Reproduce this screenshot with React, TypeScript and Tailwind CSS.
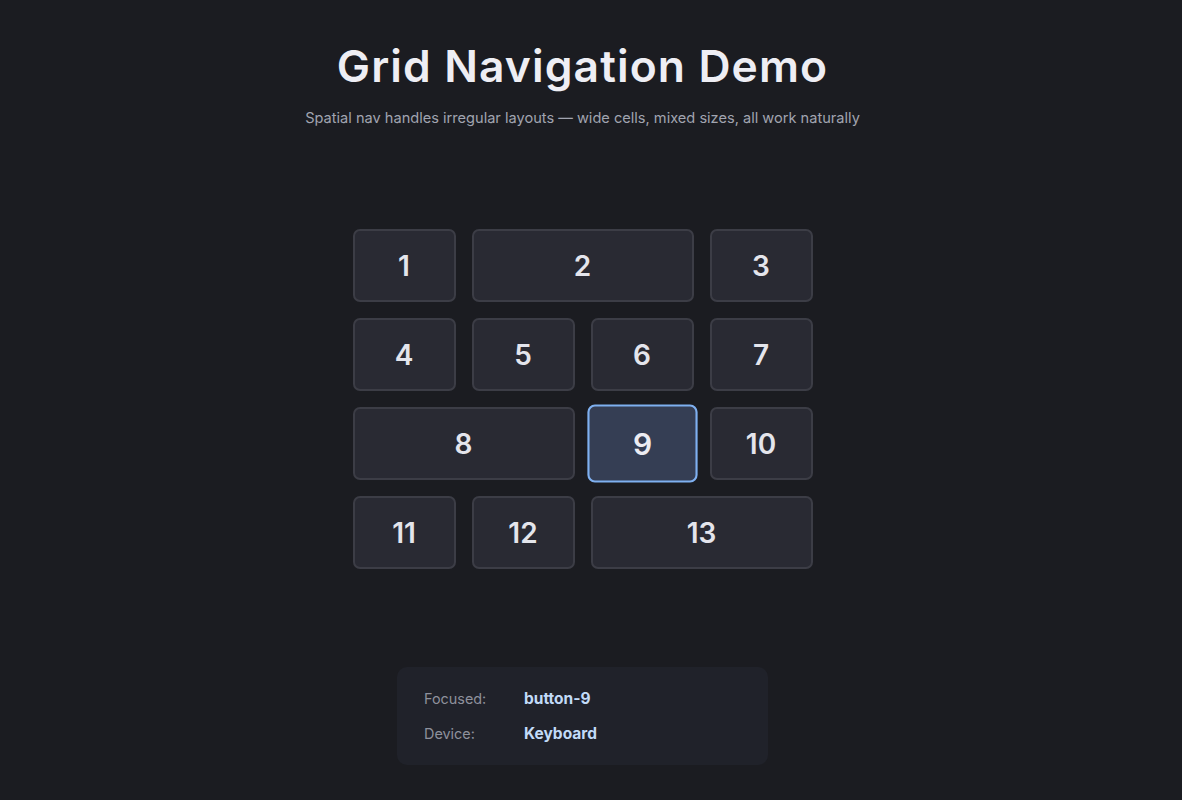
import React from "react";

const cells: { n: number; span: string; focused?: boolean }[] = [
  { n: 1, span: "col-span-1" },
  { n: 2, span: "col-span-2" },
  { n: 3, span: "col-span-1" },
  { n: 4, span: "col-span-1" },
  { n: 5, span: "col-span-1" },
  { n: 6, span: "col-span-1" },
  { n: 7, span: "col-span-1" },
  { n: 8, span: "col-span-2" },
  { n: 9, span: "col-span-1", focused: true },
  { n: 10, span: "col-span-1" },
  { n: 11, span: "col-span-1" },
  { n: 12, span: "col-span-1" },
  { n: 13, span: "col-span-2" },
];

export default function App() {
  return (
    <div
      className="min-h-screen w-full bg-[#1b1c21] flex flex-col items-center pr-[17px]"
      style={{ fontFamily: "Inter, 'Noto Sans', sans-serif" }}
    >
      <h1 className="mt-[38px] text-[44.4px] leading-[56px] font-semibold tracking-[0.025em] text-[#eeeef4]">
        Grid Navigation Demo
      </h1>
      <p className="mt-[13px] text-[14.6px] leading-[22px] text-[#a1a4b0]">
        Spatial nav handles irregular layouts — wide cells, mixed sizes, all work naturally
      </p>
      <div className="mt-[100px] grid grid-cols-4 gap-4 w-[460px] auto-rows-[73px]">
        {cells.map((c) => (
          <button
            key={c.n}
            className={
              c.span +
              " flex items-center justify-center rounded-[7px] text-[28px] font-semibold " +
              (c.focused
                ? "bg-[#353e54] border-2 border-[#7fb0f0] text-[#ececf2] scale-[1.07]"
                : "bg-[#292a33] border-2 border-[#3c3d46] text-[#e4e5ec]")
            }
          >
            {c.n}
          </button>
        ))}
      </div>
      <div className="mt-[98px] w-[371px] h-[98px] rounded-[10px] bg-[#20222a] px-[27px] py-[21px] flex flex-col gap-[13px] leading-[22px]">
        <div className="flex items-center">
          <span className="w-[100px] text-[14.4px] text-[#8e919c]">Focused:</span>
          <span className="text-[15.5px] font-bold text-[#c2dbf8]">button-9</span>
        </div>
        <div className="flex items-center">
          <span className="w-[100px] text-[14.4px] text-[#8e919c]">Device:</span>
          <span className="text-[15.5px] font-bold text-[#c2dbf8]">Keyboard</span>
        </div>
      </div>
    </div>
  );
}
